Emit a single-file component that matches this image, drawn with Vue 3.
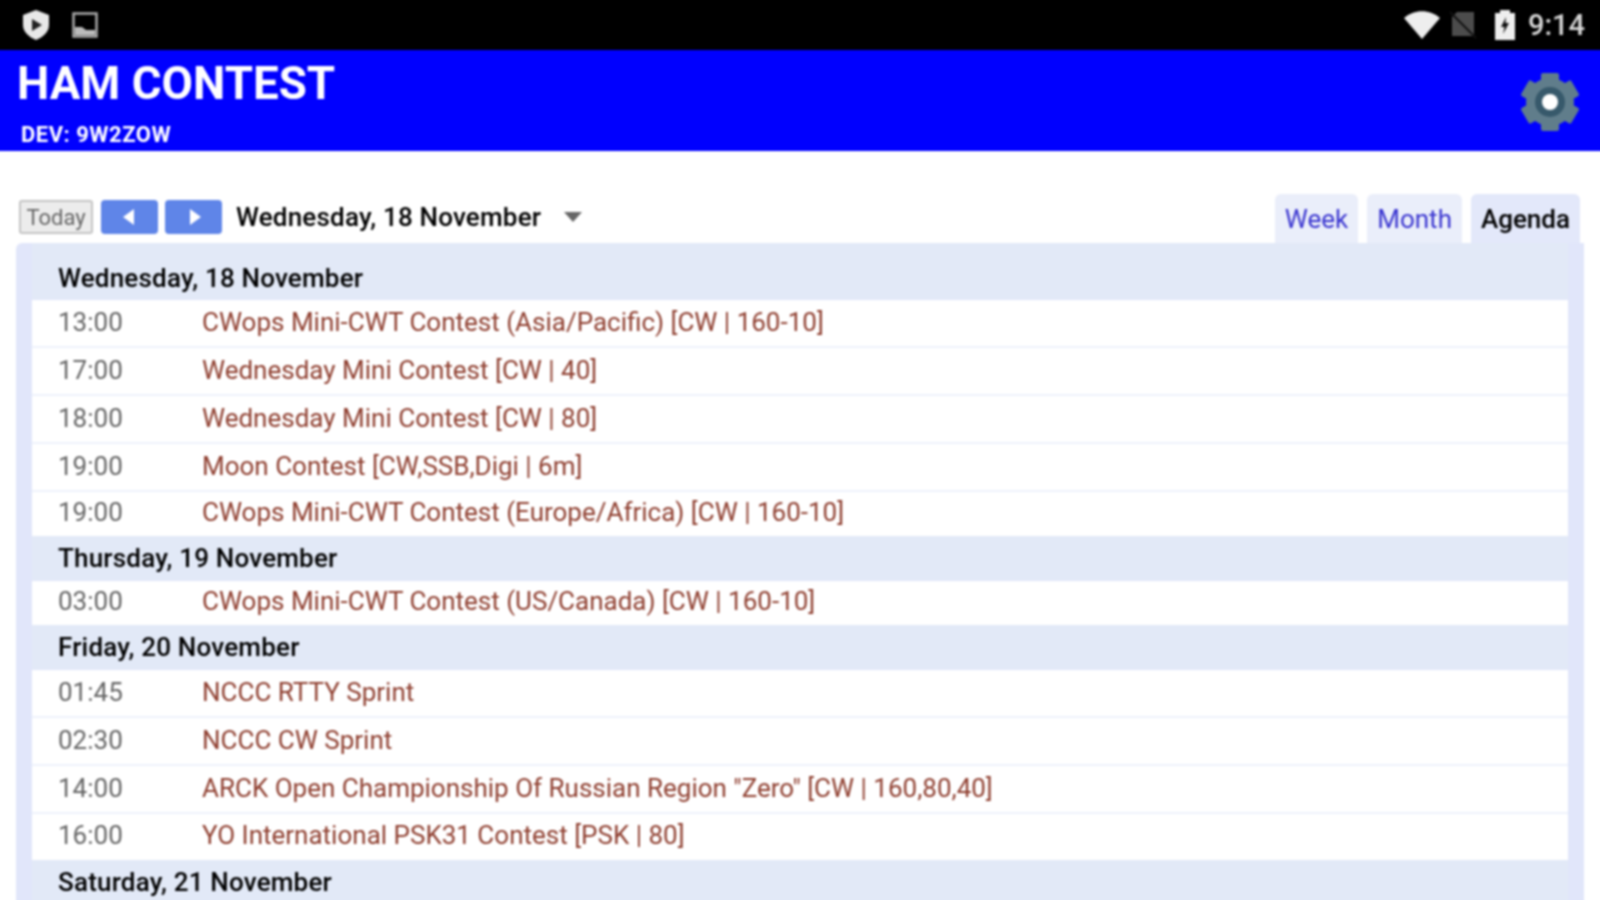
<script setup>
const days = [
  { name: 'Wednesday, 18 November', events: [
    ['13:00', 'CWops Mini-CWT Contest (Asia/Pacific) [CW | 160-10]'],
    ['17:00', 'Wednesday Mini Contest [CW | 40]'],
    ['18:00', 'Wednesday Mini Contest [CW | 80]'],
    ['19:00', 'Moon Contest [CW,SSB,Digi | 6m]'],
    ['19:00', 'CWops Mini-CWT Contest (Europe/Africa) [CW | 160-10]'],
  ] },
  { name: 'Thursday, 19 November', events: [
    ['03:00', 'CWops Mini-CWT Contest (US/Canada) [CW | 160-10]'],
  ] },
  { name: 'Friday, 20 November', events: [
    ['01:45', 'NCCC RTTY Sprint'],
    ['02:30', 'NCCC CW Sprint'],
    ['14:00', 'ARCK Open Championship Of Russian Region "Zero" [CW | 160,80,40]'],
    ['16:00', 'YO International PSK31 Contest [PSK | 80]'],
  ] },
  { name: 'Saturday, 21 November', events: [] },
]
</script>

<template>
  <div class="screen">
    <!-- page is 8px bigger than the screen on each side so the blur doesn't fade at the edges -->
    <div class="page">
      <div class="statusbar">
        <svg class="ic-shield" viewBox="0 0 30 32" width="30" height="32">
          <path d="M15 1 L28 6 V16 C28 23 22 28 15 31 C8 28 2 23 2 16 V6 Z" fill="#e8e8e8" />
          <path d="M11 10 L21 16 L11 22 Z" fill="#222" />
        </svg>
        <svg class="ic-image" viewBox="0 0 26 26" width="26" height="26">
          <rect x="1.500" y="1.500" width="23" height="23" fill="none" stroke="#aaa" stroke-width="2.500" />
          <path d="M3 21 V15 H10 L14 18 H23 V23 H3 Z" fill="#bbb" />
        </svg>
        <span class="spacer"></span>
        <svg class="ic-wifi" viewBox="0 0 36 28" width="36" height="28">
          <path d="M0 7 C10 -2 26 -2 36 7 L18 28 Z" fill="#eee" />
        </svg>
        <svg class="ic-sim" viewBox="0 0 28 28" width="28" height="28">
          <path d="M8 1 H25 V25 H3 V6 Z" fill="#4c4c4c" />
          <path d="M1 1 L27 27" stroke="#111" stroke-width="2" />
        </svg>
        <svg class="ic-batt" viewBox="0 0 22 30" width="22" height="30">
          <path d="M6 0 H16 V3 H21 V30 H1 V3 H6 Z" fill="#eee" />
          <path d="M12 7 L7 17 H10.500 L9 24 L15 13 H11.500 Z" fill="#111" />
        </svg>
        <span class="clock">9:14</span>
      </div>

      <header class="appbar">
        <div>
          <div class="title">HAM CONTEST</div>
          <div class="dev">DEV: 9W2ZOW</div>
        </div>
        <svg class="gear" viewBox="0 0 60 60" width="60" height="60">
          <g fill="#607d8b">
            <circle cx="30" cy="30" r="24" />
            <rect x="21" y="1" width="18" height="58" rx="2" />
            <rect x="21" y="1" width="18" height="58" rx="2" transform="rotate(60 30 30)" />
            <rect x="21" y="1" width="18" height="58" rx="2" transform="rotate(120 30 30)" />
          </g>
          <circle cx="30" cy="30" r="15" fill="#37596b" />
          <circle cx="30" cy="30" r="8" fill="#fff" />
        </svg>
      </header>

      <div class="toolbar">
        <div class="controls">
          <button class="today">Today</button>
          <button class="nav"><span class="arrow left"></span></button>
          <button class="nav"><span class="arrow right"></span></button>
          <span class="date">Wednesday, 18 November</span>
          <span class="caret"></span>
        </div>
        <div class="tabs">
          <a class="tab">Week</a>
          <a class="tab">Month</a>
          <a class="tab active">Agenda</a>
        </div>
      </div>

      <div class="panel">
        <template v-for="day in days" :key="day.name">
          <div class="dayhead">{{ day.name }}</div>
          <div v-for="(ev, i) in day.events" :key="i" class="row" :class="{ last: i === day.events.length - 1 }">
            <span class="time">{{ ev[0] }}</span>
            <span class="event">{{ ev[1] }}</span>
          </div>
        </template>
      </div>
    </div>
  </div>
</template>

<style scoped>
.screen {
  width: 1600px;
  height: 900px;
  overflow: hidden;
  background: #fff;
  font-family: Roboto, sans-serif;
}

.page {
  width: 1616px;
  height: 916px;
  margin: -8px 0 0 -8px;
  overflow: hidden;
  background: #fff;
  filter: blur(0.8px);
}

.spacer {
  flex: 1;
}

.statusbar {
  height: 58px;
  box-sizing: border-box;
  background: #000;
  display: flex;
  align-items: center;
  padding: 8px 23px 0 29px;
}

.ic-shield {
  margin-right: 21px;
}

.ic-wifi {
  margin-right: 9px;
}

.ic-sim {
  margin-right: 17px;
}

.ic-batt {
  margin-right: 12px;
}

.clock {
  color: #d8d8d8;
  font-size: 29px;
  font-weight: 500;
}

.appbar {
  height: 101px;
  background: #0000ff;
  color: #fff;
  display: flex;
  align-items: center;
  justify-content: space-between;
  padding: 0 28px 0 25px;
  box-sizing: border-box;
}

.appbar > div {
  padding-top: 4px;
}

.gear {
  margin-top: 3px;
}

.title {
  font-size: 45.7px;
  font-weight: 700;
  line-height: 54px;
}

.dev {
  font-size: 22px;
  font-weight: 700;
  letter-spacing: 0.5px;
  line-height: 26px;
  margin: 11px 0 0 4px;
}

.toolbar {
  display: flex;
  align-items: flex-start;
  justify-content: space-between;
  height: 92px;
  padding: 49px 28px 0 27px;
  box-sizing: border-box;
}

.controls {
  display: flex;
  align-items: center;
  height: 34px;
}

.today {
  width: 74px;
  height: 34px;
  margin-right: 8px;
  padding: 0;
  background: #ececec;
  border: 2px solid #c4c4c4;
  border-radius: 3px;
  color: #666;
  font-family: inherit;
  font-size: 22px;
}

.nav {
  width: 57px;
  height: 34px;
  margin-right: 7px;
  background: #5f85e8;
  border: none;
  border-radius: 4px;
  display: flex;
  align-items: center;
  justify-content: center;
  padding: 0;
}

.arrow {
  width: 0;
  height: 0;
  border-top: 8px solid transparent;
  border-bottom: 8px solid transparent;
}

.arrow.left {
  border-right: 11px solid #fff;
  margin-right: 2px;
}

.arrow.right {
  border-left: 11px solid #fff;
  margin-left: 4px;
}

.date {
  margin-left: 7px;
  font-size: 26px;
  font-weight: 500;
  letter-spacing: 0.2px;
  color: #000;
}

.caret {
  margin-left: 23px;
  border-left: 9px solid transparent;
  border-right: 9px solid transparent;
  border-top: 10px solid #666;
}

.tabs {
  display: flex;
  gap: 9px;
  margin-top: -6px;
}

.tab {
  height: 49px;
  line-height: 50px;
  padding: 0 10px;
  background: #eaeefa;
  border-radius: 6px 6px 0 0;
  color: #3a35d0;
  font-size: 26px;
}

.tab.active {
  background: #e3e8fa;
  color: #000;
  font-weight: 500;
}

.panel {
  margin: 0 24px;
  padding: 0 16px;
  background: #e1e6fa;
  border-radius: 6px 0 0 0;
}

.dayhead {
  height: 44px;
  line-height: 44px;
  padding-left: 26px;
  background: #e2e9f7;
  margin: 0 0 1px;
  font-size: 26px;
  font-weight: 500;
  letter-spacing: 0.2px;
  color: #000;
}

.dayhead:first-child {
  height: 56px;
  line-height: 70px;
}

.row {
  display: flex;
  align-items: center;
  height: 48px;
  padding: 0 0 2px 26px;
  box-sizing: border-box;
  background: #fff;
  border-bottom: 2px solid #eef2fb;
  font-size: 26px;
}

.row.last {
  height: 44px;
  padding-bottom: 5px;
  border-bottom: none;
}

/* last row before the Saturday heading sits a bit lower */
.row.last:nth-last-child(2) {
  height: 46px;
  padding-bottom: 4px;
}

.time {
  width: 144px;
  color: #666;
}

.event {
  color: #8f3f30;
}
</style>

<style>
html, body {
  margin: 0;
  background: #fff;
}
</style>
